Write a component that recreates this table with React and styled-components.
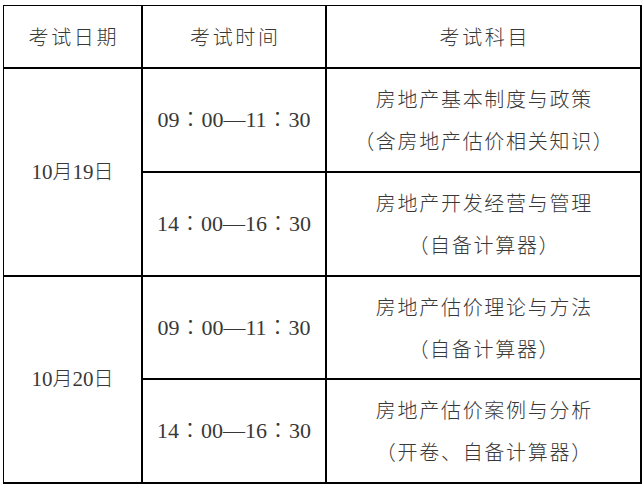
import React from "react";
import styled, { createGlobalStyle } from "styled-components";

const GlobalStyle = createGlobalStyle`
  html, body {
    margin: 0;
    padding: 0;
    background: #ffffff;
  }
`;

const Page = styled.div`
  padding: 5px 0 0 3px;
  width: 644px;
  height: 487px;
  box-sizing: border-box;
  background: #ffffff;
`;

const Table = styled.div`
  display: grid;
  grid-template-columns: 137px 182px 313px;
  grid-template-rows: 61px 102px 102px 101px 102px;
  gap: 2px;
  padding: 1px 2px 2px 1px;
  background: #000;
  width: max-content;
`;

const Cell = styled.div`
  background: #fff;
  display: flex;
  flex-direction: column;
  align-items: center;
  justify-content: center;
  grid-row: ${(p) => (p.$span ? `span ${p.$span}` : "auto")};
  grid-column: ${(p) => p.$col || "auto"};
  font-family: "Noto Sans CJK SC", sans-serif;
  font-weight: 300;
  color: #383838;
`;

const HeadText = styled.span`
  font-size: 20px;
  letter-spacing: 2.6px;
  padding-left: 2.6px;
`;

const Num = styled.span`
  font-family: "Liberation Serif", serif;
  font-weight: 400;
`;

const Colon = styled.span`
  font-family: "Noto Sans CJK TC", "Noto Sans CJK JP", sans-serif;
`;

const DateText = styled.span`
  font-size: 20px;
  margin-top: -4px;
  & ${Num} {
    font-size: 21px;
  }
`;

const TimeText = styled.span`
  font-size: 22px;
  margin-top: -6px;
`;

const Line = styled.span`
  font-size: 20px;
  line-height: 42px;
  letter-spacing: 1.7px;
  padding-left: 1.7px;
  white-space: nowrap;
`;

const Time = ({ from, to }) => (
  <TimeText>
    <Num>{from[0]}</Num>
    <Colon>：</Colon>
    <Num>{from[1]}—{to[0]}</Num>
    <Colon>：</Colon>
    <Num>{to[1]}</Num>
  </TimeText>
);

const rows = [
  {
    month: "10",
    day: "19",
    slots: [
      { from: ["09", "00"], to: ["11", "30"], lines: ["房地产基本制度与政策", "（含房地产估价相关知识）"] },
      { from: ["14", "00"], to: ["16", "30"], lines: ["房地产开发经营与管理", "（自备计算器）"] },
    ],
  },
  {
    month: "10",
    day: "20",
    slots: [
      { from: ["09", "00"], to: ["11", "30"], lines: ["房地产估价理论与方法", "（自备计算器）"] },
      { from: ["14", "00"], to: ["16", "30"], lines: ["房地产估价案例与分析", "（开卷、自备计算器）"] },
    ],
  },
];

function App() {
  return (
    <>
      <GlobalStyle />
      <Page>
        <Table>
          <Cell><HeadText>考试日期</HeadText></Cell>
          <Cell><HeadText>考试时间</HeadText></Cell>
          <Cell><HeadText>考试科目</HeadText></Cell>
          {rows.map((d) => (
            <React.Fragment key={d.day}>
              <Cell $span={2} $col={1}>
                <DateText>
                  <Num>{d.month}</Num>月<Num>{d.day}</Num>日
                </DateText>
              </Cell>
              {d.slots.map((s, i) => (
                <React.Fragment key={i}>
                  <Cell $col={2}>
                    <Time from={s.from} to={s.to} />
                  </Cell>
                  <Cell $col={3}>
                    {s.lines.map((l) => (
                      <Line key={l}>{l}</Line>
                    ))}
                  </Cell>
                </React.Fragment>
              ))}
            </React.Fragment>
          ))}
        </Table>
      </Page>
    </>
  );
}

export default App;
